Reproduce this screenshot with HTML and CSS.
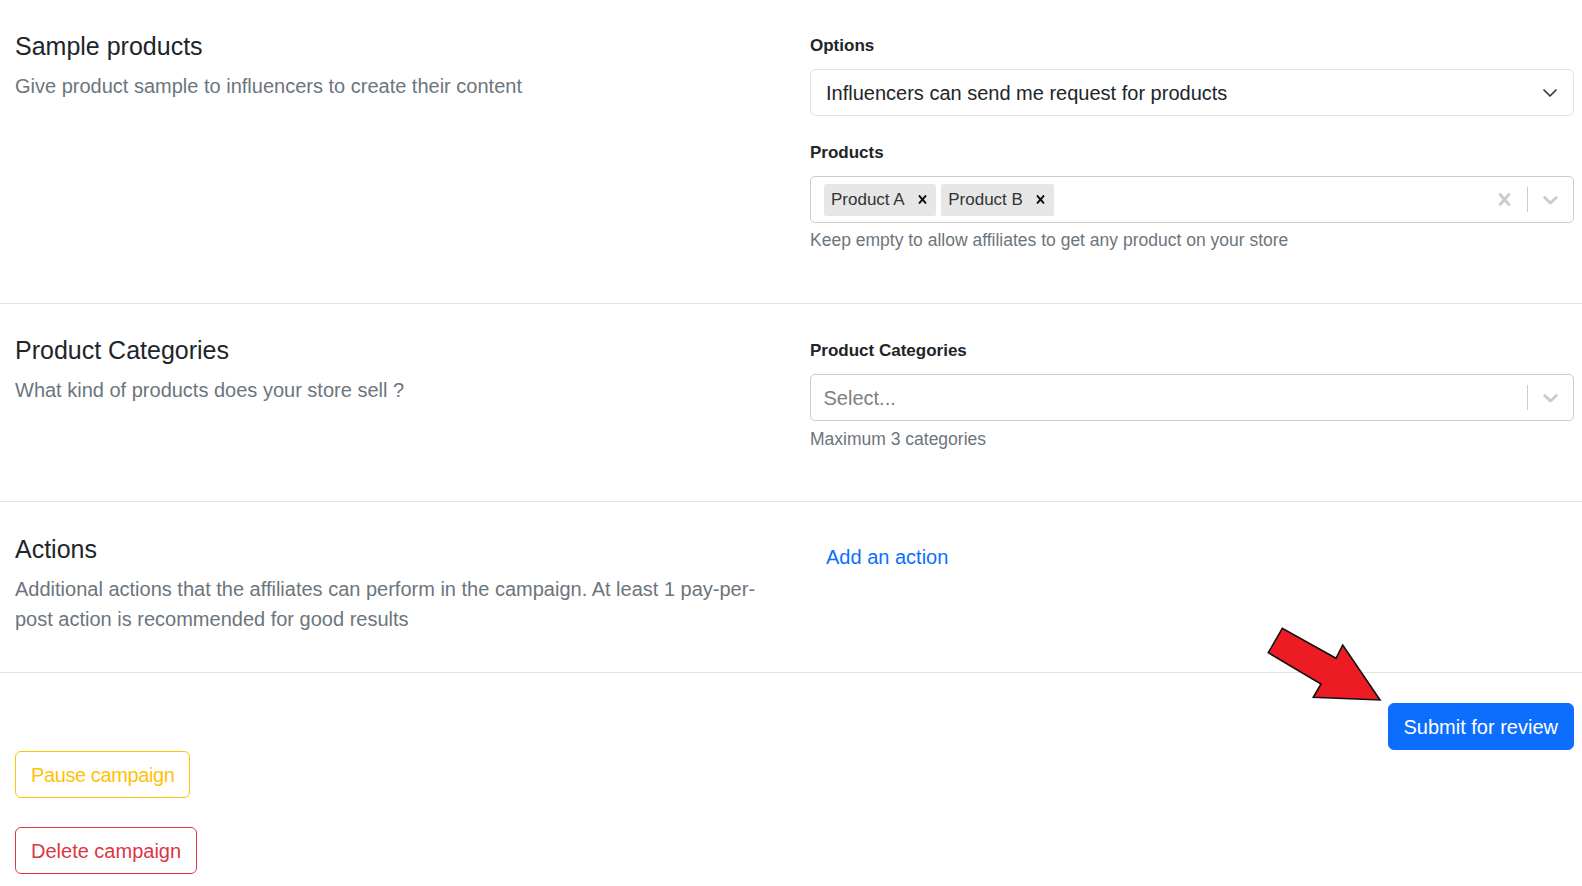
FILE: index.html
```html
<!DOCTYPE html>
<html lang="en">
<head>
<meta charset="utf-8">
<title>Campaign settings</title>
<link rel="stylesheet" href="styles.css">
</head>
<body>
<main class="page">
  <section class="sec sec-first">
    <div class="col-info">
      <h2 class="sec-title">Sample products</h2>
      <p class="sec-desc">Give product sample to influencers to create their content</p>
    </div>
    <div class="col-form">
      <div class="field">
        <label class="field-label">Options</label>
        <div class="select">
          <span class="select-value">Influencers can send me request for products</span>
          <svg class="select-chevron" width="16" height="16" viewBox="0 0 16 16"><path d="M2 5l6 6 6-6" fill="none" stroke="#343a40" stroke-width="1.7" stroke-linecap="round" stroke-linejoin="round"/></svg>
        </div>
      </div>
      <div class="field">
        <label class="field-label">Products</label>
        <div class="rs-control">
          <div class="rs-values">
            <span class="chip"><span class="chip-label">Product A</span><span class="chip-remove"><svg width="17" height="17" viewBox="0 0 20 20"><path d="M14.348 14.849c-0.469 0.469-1.229 0.469-1.697 0l-2.651-3.030-2.651 3.029c-0.469 0.469-1.229 0.469-1.697 0-0.469-0.469-0.469-1.229 0-1.697l2.758-3.15-2.759-3.152c-0.469-0.469-0.469-1.228 0-1.697s1.228-0.469 1.697 0l2.652 3.031 2.651-3.031c0.469-0.469 1.228-0.469 1.697 0s0.469 1.229 0 1.697l-2.758 3.152 2.758 3.150c0.469 0.469 0.469 1.229 0 1.698z"/></svg></span></span>
            <span class="chip"><span class="chip-label">Product B</span><span class="chip-remove"><svg width="17" height="17" viewBox="0 0 20 20"><path d="M14.348 14.849c-0.469 0.469-1.229 0.469-1.697 0l-2.651-3.030-2.651 3.029c-0.469 0.469-1.229 0.469-1.697 0-0.469-0.469-0.469-1.229 0-1.697l2.758-3.15-2.759-3.152c-0.469-0.469-0.469-1.228 0-1.697s1.228-0.469 1.697 0l2.652 3.031 2.651-3.031c0.469-0.469 1.228-0.469 1.697 0s0.469 1.229 0 1.697l-2.758 3.152 2.758 3.150c0.469 0.469 0.469 1.229 0 1.698z"/></svg></span></span>
          </div>
          <div class="rs-indicators">
            <span class="rs-ind"><svg width="25" height="25" viewBox="0 0 20 20"><path d="M14.348 14.849c-0.469 0.469-1.229 0.469-1.697 0l-2.651-3.030-2.651 3.029c-0.469 0.469-1.229 0.469-1.697 0-0.469-0.469-0.469-1.229 0-1.697l2.758-3.15-2.759-3.152c-0.469-0.469-0.469-1.228 0-1.697s1.228-0.469 1.697 0l2.652 3.031 2.651-3.031c0.469-0.469 1.228-0.469 1.697 0s0.469 1.229 0 1.697l-2.758 3.152 2.758 3.150c0.469 0.469 0.469 1.229 0 1.698z"/></svg></span>
            <span class="rs-sep"></span>
            <span class="rs-ind"><svg width="25" height="25" viewBox="0 0 20 20"><path d="M4.516 7.548c0.436-0.446 1.043-0.481 1.576 0l3.908 3.747 3.908-3.747c0.533-0.481 1.141-0.446 1.574 0 0.436 0.445 0.408 1.197 0 1.615-0.406 0.418-4.695 4.502-4.695 4.502-0.217 0.223-0.502 0.335-0.787 0.335s-0.57-0.112-0.789-0.335c0 0-4.287-4.084-4.695-4.502s-0.436-1.170 0-1.615z"/></svg></span>
          </div>
        </div>
        <div class="help">Keep empty to allow affiliates to get any product on your store</div>
      </div>
    </div>
  </section>

  <section class="sec sec-categories">
    <div class="col-info">
      <h2 class="sec-title">Product Categories</h2>
      <p class="sec-desc">What kind of products does your store sell ?</p>
    </div>
    <div class="col-form">
      <div class="field">
        <label class="field-label">Product Categories</label>
        <div class="rs-control">
          <div class="rs-values"><span class="rs-placeholder">Select...</span></div>
          <div class="rs-indicators">
            <span class="rs-sep"></span>
            <span class="rs-ind"><svg width="25" height="25" viewBox="0 0 20 20"><path d="M4.516 7.548c0.436-0.446 1.043-0.481 1.576 0l3.908 3.747 3.908-3.747c0.533-0.481 1.141-0.446 1.574 0 0.436 0.445 0.408 1.197 0 1.615-0.406 0.418-4.695 4.502-4.695 4.502-0.217 0.223-0.502 0.335-0.787 0.335s-0.57-0.112-0.789-0.335c0 0-4.287-4.084-4.695-4.502s-0.436-1.170 0-1.615z"/></svg></span>
          </div>
        </div>
        <div class="help">Maximum 3 categories</div>
      </div>
    </div>
  </section>

  <section class="sec sec-actions">
    <div class="col-info">
      <h2 class="sec-title">Actions</h2>
      <p class="sec-desc">Additional actions that the affiliates can perform in the campaign. At least 1 pay-per-post action is recommended for good results</p>
    </div>
    <div class="col-form">
      <button class="btn btn-link" type="button">Add an action</button>
    </div>
  </section>

  <section class="sec-footer">
    <div class="submit-row">
      <button class="btn btn-primary" type="button">Submit for review</button>
    </div>
    <div class="campaign-controls">
      <button class="btn btn-outline-warning" type="button">Pause campaign</button>
      <button class="btn btn-outline-danger" type="button">Delete campaign</button>
    </div>
  </section>

  <svg class="annot-arrow" width="130" height="92" viewBox="1260 616 130 92">
    <polygon points="1282.3,628.3 1268.3,652.7 1321,684 1313.3,697.3 1380,700 1342.7,645 1336,658.3" fill="#ed1c24" stroke="#111" stroke-width="1.6" stroke-linejoin="miter"/>
  </svg>
</main>
</body>
</html>
```

FILE: styles.css
```css
* {
  box-sizing: border-box;
}

html, body {
  margin: 0;
  padding: 0;
  background: #fff;
}

body {
  font-family: "Liberation Sans", Arial, sans-serif;
  font-size: 20px;
  line-height: 1.5;
  color: #212529;
}

.page {
  position: relative;
  width: 1582px;
}

.sec {
  display: flex;
  padding: 31px 8px 28px 15px;
  border-bottom: 1px solid #dee2e6;
}

.sec-first {
  padding-top: 31px;
}

.sec-categories .col-form {
  padding-top: 1px;
}

.sec-categories .help {
  margin-top: 5px;
}

.sec-categories {
  padding-bottom: 27px;
}

.sec-actions .col-info {
  padding-top: 1px;
}

.col-info {
  width: 765px;
  flex: 0 0 765px;
}

.col-form {
  flex: 1 1 auto;
  margin-left: 30px;
  min-width: 0;
}

.sec-title {
  margin: 0;
  font-size: 25px;
  font-weight: 400;
  line-height: 30px;
  color: #212529;
}

.sec-desc {
  margin: 10px 0 10px;
  font-size: 20px;
  line-height: 30px;
  color: #6c757d;
}

.field {
  margin-bottom: 22px;
}

.field-label {
  display: block;
  font-size: 17px;
  font-weight: 700;
  line-height: 30px;
  margin-bottom: 8px;
  color: #212529;
}

.select {
  display: flex;
  align-items: center;
  justify-content: space-between;
  height: 47px;
  padding: 0 15px;
  border: 1px solid #dee2e6;
  border-radius: 6px;
  background: #fff;
  font-size: 20px;
  line-height: 30px;
  color: #212529;
}

.select-chevron {
  display: block;
  flex: 0 0 16px;
}

.rs-control {
  display: flex;
  align-items: center;
  height: 47px;
  border: 1px solid #cccccc;
  border-radius: 5px;
  background: #fff;
}

.rs-values {
  flex: 1 1 auto;
  display: flex;
  align-items: center;
  padding: 2px 10px;
  min-width: 0;
}

.rs-placeholder {
  margin-left: 2.5px;
  font-size: 20px;
  line-height: 30px;
  color: #808080;
}

.chip {
  display: flex;
  align-items: stretch;
  height: 32px;
  margin: 2.5px;
  border-radius: 2.5px;
  background: #e6e6e6;
}

.chip-label {
  padding: 0 4px 0 7.5px;
  font-size: 17px;
  line-height: 32px;
  color: #333333;
}

.chip-remove {
  display: flex;
  align-items: center;
  padding: 0 5px;
  border-radius: 2.5px;
}

.chip-remove svg {
  display: block;
  fill: #111;
}

.rs-indicators {
  display: flex;
  align-items: center;
  align-self: stretch;
}

.rs-ind {
  display: flex;
  align-items: center;
  padding: 10px;
}

.rs-ind svg {
  display: block;
  fill: #cccccc;
}

.rs-sep {
  align-self: stretch;
  width: 1px;
  margin: 10px 0;
  background: #cccccc;
}

.help {
  margin-top: 4px;
  font-size: 17.5px;
  line-height: 26px;
  color: #6c757d;
}

.btn {
  display: inline-block;
  font-family: inherit;
  font-size: 20px;
  line-height: 30px;
  padding: 7.5px 15px;
  border: 1px solid transparent;
  border-radius: 6px;
  background: transparent;
  cursor: pointer;
}

.btn-link {
  color: #0d6efd;
}

.btn-primary {
  background: #0d6efd;
  border-color: #0d6efd;
  color: #fff;
}

.btn-outline-warning {
  border-color: #ffc107;
  color: #ffc107;
  letter-spacing: -0.4px;
}

.btn-outline-danger {
  border-color: #dc3545;
  color: #dc3545;
}

.sec-footer {
  padding: 30px 8px 0 15px;
}

.submit-row {
  display: flex;
  justify-content: flex-end;
}

.campaign-controls {
  display: flex;
  flex-direction: column;
  align-items: flex-start;
  gap: 29px;
  margin-top: 1px;
}

.annot-arrow {
  position: absolute;
  left: 1260px;
  top: 616px;
  pointer-events: none;
}
```
